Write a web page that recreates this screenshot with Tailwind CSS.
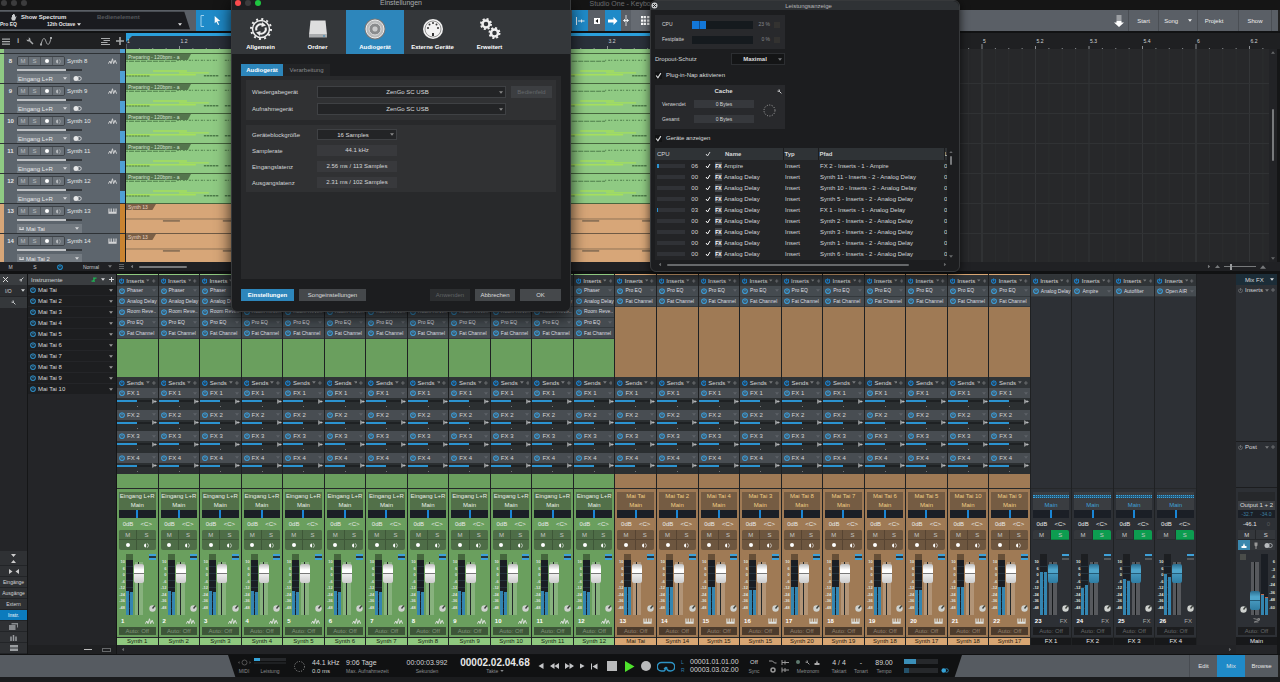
<!DOCTYPE html>
<html lang="de">
<head>
    <meta charset="UTF-8">
    <title>Studio One</title>
    <script src="https://cdn.jsdelivr.net/npm/@tailwindcss/browser@4"></script>
</head>
<body class="relative flex min-h-screen flex-col overflow-hidden bg-[#111213] font-['Liberation_Sans',Arial,sans-serif] text-[6px] leading-[8px] text-[#d4d6d8] select-none">

    <!-- icon set -->
    <svg class="hidden">
        <symbol id="power" viewBox="0 0 12 12"><path d="M3 2.600a4.700 4.700 0 1 0 6 0M6 1v5" fill="none" stroke="currentColor" stroke-width="2.400" stroke-linecap="round"/></symbol>
        <symbol id="caret" viewBox="0 0 10 6"><path d="M0 0h10L5 6z" fill="currentColor"/></symbol>
        <symbol id="plus" viewBox="0 0 10 10"><path d="M5 0v10M0 5h10" stroke="currentColor" stroke-width="2"/></symbol>
        <symbol id="wrench" viewBox="0 0 16 16"><path d="M7 7l7 7" stroke="currentColor" stroke-width="3"/><path d="M5 1a4 4 0 1 1-4 4l3 1 2-2z" fill="currentColor"/></symbol>
        <symbol id="wave" viewBox="0 0 24 16"><path d="M1 15l4-7 3 7 4-13 3 13 4-9 4 9" fill="none" stroke="currentColor" stroke-width="2.600"/></symbol>
        <symbol id="keys" viewBox="0 0 24 14"><path d="M1 0h3v9h3V0h3v9h4V0h3v9h3V0h3v14H1z" fill="currentColor"/></symbol>
        <symbol id="half" viewBox="0 0 12 12"><path d="M5 1a5 5 0 0 0 0 10z" fill="currentColor"/><path d="M7 1.200a5 5 0 0 1 0 9.600" fill="none" stroke="currentColor" stroke-width="1.400"/></symbol>
        <symbol id="stereo" viewBox="0 0 18 10"><circle cx="6" cy="5" r="5" fill="currentColor"/><circle cx="12.500" cy="5" r="4" fill="none" stroke="currentColor" stroke-width="1.600"/></symbol>
        <symbol id="knob" viewBox="0 0 12 12"><circle cx="6" cy="6" r="5.500" fill="currentColor"/><path d="M6 6L10 1" stroke="#3c403c" stroke-width="2.400"/></symbol>
        <symbol id="check" viewBox="0 0 12 12"><path d="M2 6l3 4 5-8" fill="none" stroke="currentColor" stroke-width="2"/></symbol>
        <symbol id="sendpan" viewBox="0 0 14 12"><path d="M2 0v12M5 2v8M5 6h8M9 3v6" fill="none" stroke="currentColor" stroke-width="2"/></symbol>
    </svg>

    <!-- title bar -->
    <header class="flex h-[10px] items-start bg-[#151515] text-[7px] leading-[7px] text-[#6d6f71]">
        <div class="flex gap-[4px] pl-[1px]">
            <span class="size-[6px] rounded-full bg-[#3c3c3d]"></span>
            <span class="size-[6px] rounded-full bg-[#3c3c3d]"></span>
            <span class="size-[6px] rounded-full bg-[#3c3c3d]"></span>
        </div>
        <h1 class="flex-1 pr-[36px] text-center">Studio One - Keyboard Demo</h1>
    </header>

    <!-- toolbar -->
    <div class="flex h-[21px] bg-[#5a5f66]">
        <div class="flex w-[190px] flex-col justify-center bg-[#1a1b1f] font-bold leading-[7px] text-[#e4e5e6] [clip-path:polygon(0_8%,97%_8%,100%_92%,0_92%)]">
            <div class="flex items-center">
                <svg class="ml-[10px] h-[7px] w-[7px] text-[#c9cbcd]" viewBox="0 0 14 14"><path d="M2 7l2 0V2h2v4-6h2v6-5h2v6l2-3 1 1-3 8H4z" fill="currentColor"/></svg>
                <span class="ml-[4px] w-[76px]">Show Spectrum</span>
                <span class="text-[#55585c]">Bedienelement</span>
            </div>
            <div class="flex items-center">
                <span class="w-[47px] text-[5px]">Pro EQ</span>
                <span class="text-[5px]">12th Octave</span>
                <svg class="ml-[2px] h-[3px] w-[4px]"><use href="#caret"/></svg>
                <svg class="mr-[8px] ml-auto h-[3px] w-[4px]"><use href="#caret"/></svg>
            </div>
        </div>
        <div class="ml-[6px] flex w-[60px] items-center gap-[10px] bg-[#1f8ac8] pl-[4px] text-white">
            <svg class="h-[12px] w-[4px]" viewBox="0 0 4 12"><path d="M4 .5H1v11h3" fill="none" stroke="#9dd0ee"/></svg>
            <button aria-label="Pfeil"><svg class="h-[9px] w-[7px]" viewBox="0 0 12 16"><path d="M1 0l10 9-5 .5L9 15l-2 1-3-6-3 3z" fill="#fff"/></svg></button>
            <button aria-label="Bereich"><svg class="size-[8px]" viewBox="0 0 12 12"><path d="M1 1h8v8H1z" fill="none" stroke="#cde6f5" stroke-dasharray="2"/></svg></button>
        </div>
        <div class="flex flex-1">
            <div class="flex w-[403px] justify-end">
                <button aria-label="Raster" class="flex w-[16px] items-center justify-center bg-[#1f8ac8]"><svg class="h-[8px] w-[9px]" viewBox="0 0 18 16"><path d="M1 0v16M4 8h13M11 5v6" stroke="#eaf4fa" stroke-width="2"/></svg></button>
                <button aria-label="Cursor folgt" class="flex w-[17px] items-center justify-center"><svg class="h-[6px] w-[6px]" viewBox="0 0 12 12"><path d="M0 0h12v12H0z" fill="#fff"/><path d="M8 2L3 6l5 4z" fill="#111"/></svg></button>
                <button aria-label="Autoscroll" class="flex w-[16px] items-center justify-center bg-[#1f8ac8]"><svg class="h-[8px] w-[10px]" viewBox="0 0 20 16"><path d="M0 5h11V0l8 8-8 8v-5H0z" fill="#fff"/></svg></button>
                <button aria-label="Cursor" class="flex w-[10px] items-center justify-center"><svg class="h-[11px] w-[6px]" viewBox="0 0 12 22"><path d="M6 0v22M0 11h12M3 8v6M9 8v6" stroke="#fff" stroke-width="1.500"/></svg></button>
                <button aria-label="Quantisierung" class="flex w-[28px] items-center justify-center bg-[#666b72]"><svg class="size-[9px]" viewBox="0 0 16 16"><path d="M2 0v16M7 0v16M13 0v16" stroke="#fff" stroke-width="4" stroke-dasharray="4 2"/></svg></button>
            </div>
        </div>
        <nav class="flex items-stretch text-[#eceded]">
            <span class="flex w-[22px] items-center pl-[8px]"><svg class="h-[12px] w-[10px]" viewBox="0 0 20 24"><path d="M5 0h10v15h5L10 24 0 15h5z" fill="#fff"/><path d="M4 0h12v12H4z" fill="#5a5f66" fill-opacity=".6"/></svg></span>
            <button class="w-[30px] border-l border-[#4a4e54]">Start</button>
            <button class="w-[39px] border-l border-[#4a4e54]">Song <svg class="ml-[8px] inline h-[3px] w-[4px]"><use href="#caret"/></svg></button>
            <button class="w-[41px] border-l border-[#4a4e54] pr-[8px]">Projekt</button>
            <button class="w-[33px] border-l border-[#4a4e54]">Show</button>
            <span class="w-[9px] border-r-2 border-l border-r-[#222] border-l-[#4a4e54]"></span>
        </nav>
    </div>

    <!-- arrangement -->
    <div class="mt-[2px] flex h-[16px] bg-[#1f2022]">
        <div class="flex w-[126px] items-center gap-[6px] pl-[2px] text-[#a8aaac]">
            <svg class="h-[7px] w-[8px]" viewBox="0 0 16 14"><path d="M0 2h16M0 7h16M0 12h16" stroke="currentColor" stroke-width="2.500"/></svg>
            <span class="w-[4px] text-center text-[8px] font-bold">i</span>
            <svg class="size-[8px]"><use href="#wrench"/></svg>
            <svg class="h-[9px] w-[12px]" viewBox="0 0 24 18"><path d="M2 15C6 0 9 0 12 9s7 8 10-7" fill="none" stroke="currentColor" stroke-width="2"/><path d="M0 13h4v4H0zM20 0h4v4h-4z" fill="currentColor"/></svg>
            <svg class="ml-auto h-[7px] w-[9px]" viewBox="0 0 18 14"><path d="M0 1h18M5 5h13M0 9h13M0 13h18" stroke="currentColor" stroke-width="2"/></svg>
            <svg class="mr-[2px] size-[8px]"><use href="#plus"/></svg>
        </div>
        <div class="relative flex-1 overflow-hidden">
            <div class="h-[3px] w-[60%] bg-[#2b9fdc]"></div>
            <div class="h-[13px] w-[60%] bg-[#2a303a]"></div>
            <div id="ruler" class="absolute inset-0 text-[5px]"></div>
        </div>
        <div class="w-[11px]"></div>
    </div>

    <div class="flex h-[213px]">
        <div id="tracks" class="flex w-[126px] flex-col justify-start overflow-hidden border-r border-[#1a1b1d] bg-[#5d656d]"></div>
        <div class="relative flex-1 overflow-hidden bg-[#27282a]">
            <svg id="grid" class="absolute inset-0 size-full" viewBox="0 0 1143 213" preserveAspectRatio="none"></svg>
            <div id="clips" class="relative w-[60%] border-r border-[#222]"></div>
        </div>
        <div class="flex w-[8px] flex-col items-center justify-between bg-[#222326] py-[2px] text-[#66686a]">
            <svg class="h-[3px] w-[4px] rotate-180"><use href="#caret"/></svg>
            <div class="mb-[42px] h-[52px] w-[2px] rounded bg-[#77797b]"></div>
            <svg class="h-[3px] w-[4px]"><use href="#caret"/></svg>
        </div>
        <div class="w-[3px] bg-[#151617]"></div>
    </div>

    <div class="flex h-[9px] items-center bg-[#202124] text-[5px] text-[#c9cbcd]">
        <button class="w-[21px]">M</button>
        <button class="w-[28px]">S</button>
        <button aria-label="Aktiv" class="w-[21px] text-[#1f8ac8]"><svg class="mx-auto size-[6px]"><use href="#power"/></svg></button>
        <button class="ml-[6px] w-[30px]">Normal</button>
        <svg class="ml-[2px] h-[3px] w-[4px] text-[#77797b]"><use href="#caret"/></svg>
        <svg class="ml-[7px] size-[5px] text-[#77797b]" viewBox="0 0 10 10"><path d="M0 1h10M0 5h10M0 9h10" stroke="currentColor" stroke-width="1.500"/></svg>
        <svg class="ml-[6px] h-[3px] w-[4px] rotate-90 text-[#77797b]"><use href="#caret"/></svg>
        <div class="ml-[5px] h-[2px] w-[48px] rounded bg-[#77797b]"></div>
        <div class="ml-auto mr-[14px] flex items-center gap-[4px] text-[#77797b]">
            <svg class="h-[3px] w-[4px] -rotate-90"><use href="#caret"/></svg>
            <svg class="h-[3px] w-[5px] rotate-180"><use href="#caret"/></svg>
            <input type="range" aria-label="Zoom" value="20" class="h-px w-[32px] appearance-none bg-[#77797b] [&::-webkit-slider-thumb]:h-[6px] [&::-webkit-slider-thumb]:w-[2px] [&::-webkit-slider-thumb]:appearance-none [&::-webkit-slider-thumb]:bg-[#9a9c9e]">
            <svg class="h-[4px] w-[6px] rotate-180"><use href="#caret"/></svg>
        </div>
    </div>

    <!-- mixer -->
    <main class="mt-[3px] flex flex-1 bg-[#242528]">
        <aside class="flex w-[27px] flex-col text-[5px] leading-[6px]">
            <div class="flex h-[11px] items-center justify-between bg-[#3a3d40] px-[3px]">
                <button aria-label="Schließen"><svg class="size-[5px]" viewBox="0 0 10 10"><path d="M0 0l10 10M10 0L0 10" stroke="#ddd" stroke-width="2"/></svg></button>
                <svg class="size-[5px] -rotate-90"><use href="#wrench"/></svg>
            </div>
            <div class="flex h-[11px] items-center justify-between bg-[#2c2e31] pr-[2px] pl-[5px]">I/O <svg class="h-[3px] w-[4px]"><use href="#caret"/></svg></div>
            <div class="mt-px flex h-[11px] items-center justify-center bg-[#35383b]"><svg class="size-[5px]"><use href="#wrench"/></svg></div>
            <div class="mt-auto grid auto-rows-[11px] grid-rows-[15px] *:border-b *:border-[#222427]">
                <button aria-label="Höhe" class="bg-[#2f3134]"><svg class="mx-auto h-[9px] w-[5px]" viewBox="0 0 10 18"><path d="M0 0h10L5 6zM0 18h10l-5-6z" fill="#ccc"/></svg></button>
                <button aria-label="Breite" class="bg-[#2f3134]"><svg class="mx-auto h-[5px] w-[10px]" viewBox="0 0 20 10"><path d="M0 0v10l7-5zM20 0v10l-7-5z" fill="#ccc"/></svg></button>
                <button class="bg-[#2f3134]">Eingänge</button>
                <button class="bg-[#2f3134]">Ausgänge</button>
                <button class="bg-[#2f3134]">Extern</button>
                <button class="bg-[#0c7bbd] text-white">Instr.</button>
                <button aria-label="Gruppen" class="bg-[#2f3134]"><svg class="mx-auto h-[7px] w-[9px]" viewBox="0 0 18 14"><path d="M5 0h13v9h-2V3H5zM0 4h13v10H0z" fill="#888b8e"/></svg></button>
                <button aria-label="Fader" class="bg-[#2f3134]"><svg class="mx-auto size-[7px]" viewBox="0 0 14 14"><path d="M2 5v9M7 2v12M12 5v9" stroke="#9a9da0" stroke-width="3"/></svg></button>
                <button aria-label="Liste" class="bg-[#2f3134]"><svg class="mx-auto h-[6px] w-[8px]" viewBox="0 0 16 12"><path d="M0 0h16v5H0zM0 7h16v5H0z" fill="#9a9da0"/></svg></button>
            </div>
        </aside>
        <section class="flex w-[90px] flex-col border-x border-[#151617]">
            <h2 class="flex h-[11px] items-center gap-[4px] bg-[#3a3d40] pr-[2px] pl-[3px]">
                <span class="flex-1">Instrumente</span>
                <svg class="h-[5px] w-[6px]" viewBox="0 0 12 10"><path d="M4 2h7M1 8h7M8 2L4 8" stroke="#1fb254" stroke-width="2.500"/></svg>
                <svg class="h-[3px] w-[4px]"><use href="#caret"/></svg>
                <svg class="size-[5px]"><use href="#plus"/></svg>
            </h2>
            <ul id="instruments"></ul>
            <div class="mt-auto flex h-[9px] items-center justify-end gap-[10px] bg-[#1f2022] pr-[5px]">
                <span class="h-px w-[8px] bg-[#bbb]"></span>
                <span class="h-[4px] w-[9px] border border-[#66686a]"></span>
            </div>
        </section>
        <div class="flex flex-1 flex-col">
            <div class="flex">
                <div id="channels" class="grid flex-1 grid-cols-[repeat(26,minmax(0,1fr))]"></div>
                <div class="w-[39px]"></div>
            </div>
            <div class="flex h-[9px] items-center justify-between bg-[#222326] px-[4px] text-[#66686a]">
                <svg class="h-[3px] w-[4px] rotate-90"><use href="#caret"/></svg>
                <svg class="h-[3px] w-[4px] -rotate-90"><use href="#caret"/></svg>
            </div>
        </div>
        <div id="mainout" class="w-[41px]"></div>
        <div class="w-[3px] bg-[#151617]"></div>
    </main>

    <!-- transport -->
    <footer class="mt-px flex h-[27px] border-b-[5px] border-[#1b1c1e] bg-[#565b61] text-[5px] leading-[6px] text-[#8a8c8f]">
        <div class="ml-[228px] flex w-[734px] items-center bg-[#101112] pl-[8px] [clip-path:polygon(0_0,100%_0,99%_100%,1%_100%)]">
            <div class="flex w-[16px] flex-col items-center gap-[2px]"><svg class="h-[7px] w-[13px]" viewBox="0 0 26 14"><circle cx="13" cy="7" r="5" fill="none" stroke="#555" stroke-width="2"/><path d="M3 4v6l-3-3zM23 4v6l3-3z" fill="#555"/></svg>MIDI</div>
            <div class="flex w-[36px] flex-col items-center gap-[4px]">
                <div class="flex w-[32px] flex-col gap-px"><div class="h-[3px] bg-[#26282b]"><div class="h-full w-[20%] bg-[#35a3d8]"></div></div><div class="h-[2px] bg-[#1e2022]"></div></div>
                Leistung
            </div>
            <svg class="ml-[5px] size-[13px]" viewBox="0 0 26 26"><circle cx="13" cy="13" r="10" fill="none" stroke="#999" stroke-width="2" stroke-dasharray="2 3"/></svg>
            <div class="ml-[6px] w-[34px]"><div class="text-[7px] leading-[9px] text-[#d4d5d6]">44.1 kHz</div><div class="text-[6px] leading-[8px] text-[#d4d5d6]">0.0 ms</div></div>
            <div class="w-[50px]"><div class="text-[7px] leading-[9px] text-[#d4d5d6]">9:06 Tage</div><div class="leading-[8px]">Max. Aufnahmezeit</div></div>
            <div class="ml-[5px] w-[52px] text-center"><div class="text-[7px] leading-[9px] text-[#d4d5d6]">00:00:03.992</div><div class="leading-[8px]">Sekunden</div></div>
            <div class="ml-[3px] w-[78px] text-center"><div class="text-[10px] leading-[10px] font-bold text-[#e6e7e8]">00002.02.04.68</div><div class="leading-[7px]">Takte <svg class="inline h-[2px] w-[4px]"><use href="#caret"/></svg></div></div>
            <div class="ml-[4px] flex items-center gap-[6px] text-[#c4c5c7]">
                <button aria-label="Zurück"><svg class="h-[6px] w-[6px]" viewBox="0 0 12 12"><path d="M11 0v12L1 6z" fill="currentColor"/></svg></button>
                <button aria-label="Rückspulen"><svg class="h-[6px] w-[9px]" viewBox="0 0 18 12"><path d="M9 0v12L0 6zM18 0v12L9 6z" fill="currentColor"/></svg></button>
                <button aria-label="Vorspulen"><svg class="h-[6px] w-[9px]" viewBox="0 0 18 12"><path d="M0 0v12l9-6zM9 0v12l9-6z" fill="currentColor"/></svg></button>
                <button aria-label="Weiter"><svg class="h-[6px] w-[5px]" viewBox="0 0 12 12"><path d="M0 0v12l11-6z" fill="currentColor"/></svg></button>
                <button aria-label="Anfang"><svg class="h-[7px] w-[7px]" viewBox="0 0 14 14"><path d="M0 1h2v12H0zM13 1v12L3 7z" fill="currentColor"/></svg></button>
                <button aria-label="Stopp" class="ml-[3px] size-[10px] bg-[#b9babb]"></button>
                <button aria-label="Wiedergabe" class="ml-[2px]"><svg class="h-[11px] w-[10px]" viewBox="0 0 20 22"><path d="M0 0v22l19-11z" fill="#4ee22c"/></svg></button>
                <button aria-label="Aufnahme" class="size-[10px] rounded-full bg-[#b9babb]"></button>
                <button aria-label="Loop"><svg class="h-[11px] w-[18px]" viewBox="0 0 36 22"><path d="M13 20H9a8 8 0 0 1 0-17h18a8 8 0 0 1 0 17c-5 0-8-3-8-8M19 12l-5 4M13 20c4 0 4-4 4-8" fill="none" stroke="#2d93c4" stroke-width="3"/></svg></button>
            </div>
            <div class="ml-[6px] grid grid-cols-[9px_50px] text-[7px] leading-[8px] text-[#d4d5d6]">
                <span class="text-[5px] text-[#2d7cab]">L</span><span>00001.01.01.00</span>
                <span class="text-[5px] text-[#2d7cab]">R</span><span>00003.03.02.00</span>
            </div>
            <div class="ml-[4px] w-[20px] text-center"><div class="text-[6px] leading-[9px] text-[#d4d5d6]">Off</div><div class="leading-[8px]">Sync</div></div>
            <svg class="ml-[5px] h-[14px] w-[20px]" viewBox="0 0 40 28"><path d="M0 4h7l4 4h4M26 2v10M26 7h14M32 3v8M26 17v10M26 22h14M32 18v8" fill="none" stroke="#999" stroke-width="2"/><circle cx="8" cy="22" r="4" fill="none" stroke="#999" stroke-width="3"/></svg>
            <div class="ml-[4px] w-[30px] text-center">
                <div class="flex h-[9px] items-center justify-between px-[3px] text-[#aaa]"><span class="size-[4px] rounded-full bg-[#5f7a70]"></span><svg class="size-[5px]"><use href="#wrench"/></svg><svg class="h-[5px] w-[6px]" viewBox="0 0 12 10"><path d="M6 0l2 6h3v4H1V6h3z" fill="#aaa"/></svg></div>
                <div class="leading-[8px]">Metronom</div>
            </div>
            <div class="ml-[4px] w-[24px] text-center"><div class="text-[7px] leading-[9px] text-[#d4d5d6]">4 / 4</div><div class="leading-[8px]">Taktart</div></div>
            <div class="w-[20px] text-center"><div class="text-[7px] leading-[9px] text-[#d4d5d6]">-</div><div class="leading-[8px]">Tonart</div></div>
            <div class="w-[26px] text-center"><div class="text-[7px] leading-[9px] text-[#d4d5d6]">89.00</div><div class="leading-[8px]">Tempo</div></div>
            <div class="ml-[7px] flex flex-col gap-[4px]">
                <div class="h-[5px] w-[34px] bg-[#26282b]"><div class="h-full w-[34%] bg-[#3b8fb8]"></div></div>
                <div class="h-[5px] w-[34px] bg-[#26282b]"><div class="h-full w-[14%] bg-[#24516a]"></div></div>
            </div>
            <svg class="mt-[9px] ml-[3px] h-[5px] w-[8px] shrink-0 text-[#35a3d8]"><use href="#stereo"/></svg>
        </div>
        <div class="ml-auto flex text-[6px] text-[#e4e5e6]">
            <button class="w-[28px] border-l border-[#484c52]">Edit</button>
            <button class="w-[28px] bg-[#1f8ac8]">Mix</button>
            <button class="w-[33px]">Browse</button>
            <span class="w-[2px] bg-[#222]"></span>
        </div>
    </footer>

    <!-- settings window -->
    <div role="dialog" aria-label="Einstellungen" class="absolute top-0 left-[231px] flex h-[312px] w-[340px] flex-col rounded-b-md border border-t-0 border-[#37393b] bg-[#1c1d1f] shadow-[0_4px_16px_rgba(0,0,0,0.8)]">
        <div class="flex h-[10px] items-start bg-[#1e1f21]">
            <div class="flex w-[60px] gap-[4px] pl-[3px]">
                <span class="size-[6px] rounded-full bg-[#fb4b4d]"></span>
                <span class="size-[6px] rounded-full bg-[#3c3c3d]"></span>
                <span class="size-[6px] rounded-full bg-[#1fc540]"></span>
            </div>
            <h2 class="flex-1 pr-[60px] text-center text-[7px] leading-[6px] text-[#a9abad]">Einstellungen</h2>
        </div>
        <div class="flex h-[44px] bg-[#34373a] font-bold text-white">
            <button class="flex w-[57px] flex-col items-center justify-end gap-[2px] pb-[3px]">
                <svg class="size-[24px]" viewBox="0 0 48 48" fill="none" stroke="#eee"><circle cx="24" cy="24" r="17" stroke-width="3"/><circle cx="24" cy="24" r="20" stroke-width="4" stroke-dasharray="4 6.470"/><path d="M15 27a9 9 0 0 1 13-11M33 21a9 9 0 0 1-13 11" stroke-width="4"/><path d="M26 10l8 7-9 3zM22 38l-8-7 9-3z" fill="#eee" stroke="none"/></svg>
                Allgemein
            </button>
            <button class="flex w-[57px] flex-col items-center justify-end gap-[2px] pb-[3px]">
                <svg class="size-[24px]" viewBox="0 0 48 48"><path d="M9 7h30l3 29H6z" fill="#dedede"/><path d="M6 34h36v7H6z" fill="#a9abad"/><path d="M34 37h4v2h-4z" fill="#2d86bb"/></svg>
                Ordner
            </button>
            <button class="flex w-[58px] flex-col items-center justify-end gap-[2px] bg-[#2d86bb] pb-[3px]">
                <svg class="size-[24px]" viewBox="0 0 48 48"><circle cx="24" cy="24" r="21" fill="#77797b"/><circle cx="24" cy="24" r="18" fill="#b9babb" stroke="#eee" stroke-width="2"/><circle cx="24" cy="24" r="12" fill="#8a8c8e" stroke="#ddd" stroke-width="2"/><circle cx="24" cy="24" r="6" fill="#c9cacb" stroke="#777"/></svg>
                Audiogerät
            </button>
            <button class="flex w-[57px] flex-col items-center justify-end gap-[2px] pb-[3px]">
                <svg class="size-[24px]" viewBox="0 0 48 48"><circle cx="24" cy="24" r="20" fill="#f2f2f2"/><circle cx="24" cy="24" r="16" fill="none" stroke="#777" stroke-width="1.500"/><g fill="#333"><circle cx="14" cy="22" r="2"/><circle cx="17" cy="15" r="2"/><circle cx="24" cy="12" r="2"/><circle cx="31" cy="15" r="2"/><circle cx="34" cy="22" r="2"/><path d="M22 32h4v6h-4z"/></g></svg>
                <span class="whitespace-nowrap">Externe Geräte</span>
            </button>
            <button class="flex w-[57px] flex-col items-center justify-end gap-[2px] pb-[3px]">
                <svg class="size-[24px]" viewBox="0 0 48 48" fill="none" stroke="#eee"><circle cx="16" cy="14" r="7" stroke-width="5"/><circle cx="16" cy="14" r="10" stroke-width="4" stroke-dasharray="4 3.850"/><circle cx="33" cy="32" r="7" stroke-width="5"/><circle cx="33" cy="32" r="10" stroke-width="4" stroke-dasharray="4 3.850"/></svg>
                Erweitert
            </button>
        </div>
        <div class="mx-[9px] mt-[10px] flex h-[12px]">
            <button class="w-[42px] bg-[#2d86bb] font-bold text-white">Audiogerät</button>
            <button class="w-[47px] bg-[#222325] text-[#888a8d]">Verarbeitung</button>
        </div>
        <div class="mx-[9px] flex h-[203px] flex-col gap-[5px] bg-[#28292b] px-[5px] pt-[4px]">
            <div class="grid h-[40px] grid-cols-[60px_189px_41px] content-center gap-x-[5px] gap-y-[5px] bg-[#303133] pl-[6px]">
                <label for="playback" class="self-center">Wiedergabegerät</label>
                <span class="relative"><select id="playback" class="h-[12px] w-full appearance-none border border-[#3f4144] bg-[#232426] pr-[8px] text-[#dcddde] [text-align-last:center]"><option>ZenGo SC USB</option></select><svg class="absolute top-[5px] right-[3px] h-[3px] w-[4px] text-[#888]"><use href="#caret"/></svg></span>
                <button class="h-[12px] bg-[#3c3e41] text-[#65686b]" disabled>Bedienfeld</button>
                <label for="record" class="self-center">Aufnahmegerät</label>
                <span class="relative"><select id="record" class="h-[12px] w-full appearance-none border border-[#3f4144] bg-[#232426] pr-[8px] text-[#dcddde] [text-align-last:center]"><option>ZenGo SC USB</option></select><svg class="absolute top-[5px] right-[3px] h-[3px] w-[4px] text-[#888]"><use href="#caret"/></svg></span>
            </div>
            <div class="grid h-[67px] grid-cols-[60px_80px] content-center items-center gap-x-[5px] gap-y-[5px] bg-[#303133] pl-[6px]">
                <label for="block">Geräteblockgröße</label>
                <span class="relative"><select id="block" class="h-[11px] w-full appearance-none border border-[#3f4144] bg-[#232426] pr-[8px] text-[#dcddde] [text-align-last:center]"><option>16 Samples</option></select><svg class="absolute top-[4px] right-[3px] h-[3px] w-[4px] text-[#888]"><use href="#caret"/></svg></span>
                <span>Samplerate</span><output class="h-[11px] bg-[#38393c] text-center leading-[11px]">44.1 kHz</output>
                <span>Eingangslatenz</span><output class="h-[11px] bg-[#38393c] text-center leading-[11px]">2.56 ms / 113 Samples</output>
                <span>Ausgangslatenz</span><output class="h-[11px] bg-[#38393c] text-center leading-[11px]">2.31 ms / 102 Samples</output>
            </div>
        </div>
        <div class="mx-[9px] mt-[10px] flex h-[12px] gap-[5px] text-[#dcddde]">
            <button class="w-[53px] bg-[#2d86bb] font-bold text-white">Einstellungen</button>
            <button class="w-[67px] bg-[#45484b]">Songeinstellungen</button>
            <button class="ml-auto w-[40px] bg-[#2c2e30] text-[#606366]" disabled>Anwenden</button>
            <button class="w-[40px] bg-[#45484b]">Abbrechen</button>
            <button class="w-[41px] bg-[#45484b]">OK</button>
        </div>
    </div>

    <!-- performance window -->
    <div role="dialog" aria-label="Leistungsanzeige" class="absolute top-0 left-[650px] flex h-[272px] w-[310px] flex-col rounded-md border border-[#37393b] bg-[#1c1d1f] shadow-[0_2px_10px_rgba(0,0,0,0.7)]">
        <div class="flex h-[9px] items-center rounded-t-md bg-[#2f3235] text-[#b5b7b9]">
            <button aria-label="Schließen"><svg class="size-[7px]" viewBox="0 0 14 14"><circle cx="7" cy="7" r="6" fill="#c9cbcd"/><path d="M4 4l6 6M10 4l-6 6" stroke="#222" stroke-width="2"/></svg></button>
            <h2 class="flex-1 text-center">Leistungsanzeige</h2>
        </div>
        <div class="px-[4px]">
            <div class="mt-[5px] grid h-[34px] w-[130px] grid-cols-[29px_61px_16px_7px] content-center items-center gap-x-[1px] gap-y-[7px] bg-[#28292c] pl-[7px] text-[5px] leading-[7px]">
                <span>CPU</span><div class="h-[8px] bg-[#151a1e]"><div class="flex h-full w-[23%] justify-center bg-[#1377d8]"><span class="w-px bg-[#0d4f94]"></span></div></div><span class="text-right text-[#888a8d]">23 %</span><span class="ml-[3px] size-[6px] bg-[#333230]"></span>
                <span>Festplatte</span><div class="h-[8px] bg-[#151a1e]"></div><span class="text-right text-[#888a8d]">0 %</span><span class="ml-[3px] size-[6px] bg-[#333230]"></span>
            </div>
            <div class="mt-[4px] flex w-[130px] items-center justify-between">
                <label for="dropout">Dropout-Schutz</label>
                <span class="relative"><select id="dropout" class="h-[12px] w-[54px] appearance-none border border-[#2c2e31] bg-[#141516] pr-[6px] font-bold text-[#dcddde] [text-align-last:center]"><option>Maximal</option></select><svg class="absolute top-[5px] right-[3px] h-[3px] w-[4px] text-[#77797c]"><use href="#caret"/></svg></span>
            </div>
            <label class="mt-[5px] flex h-[10px] items-center gap-[4px] text-[#dcddde]">
                <span class="grid"><input type="checkbox" checked class="col-start-1 row-start-1 size-[7px] appearance-none bg-[#121314]"><svg class="col-start-1 row-start-1 size-[7px]"><use href="#check"/></svg></span>Plug-in-Nap aktivieren
            </label>
            <div class="mt-[5px] h-[44px] w-[130px] bg-[#28292c] px-[7px] text-[5px] leading-[7px]">
                <div class="flex h-[12px] items-center text-[6px] text-[#dcddde]"><h3 class="flex-1 pl-[8px] text-center font-bold">Cache</h3><svg class="-mr-[4px] size-[5px]"><use href="#wrench"/></svg></div>
                <div class="flex items-center justify-between">
                    <div class="grid grid-cols-[32px_60px] items-center gap-y-[7px] pt-[3px]">
                        <span>Verwendet</span><span class="h-[8px] bg-[#36383c] text-center leading-[8px]">0 Bytes</span>
                        <span>Gesamt</span><span class="h-[8px] bg-[#36383c] text-center leading-[8px]">0 Bytes</span>
                    </div>
                    <svg class="mr-[2px] size-[13px]" viewBox="0 0 26 26"><circle cx="13" cy="13" r="11" fill="none" stroke="#aaa" stroke-width="2" stroke-dasharray="2 3"/></svg>
                </div>
            </div>
            <label class="mt-[4px] flex h-[10px] items-center gap-[4px] text-[#dcddde]">
                <span class="grid"><input type="checkbox" checked class="col-start-1 row-start-1 size-[7px] appearance-none bg-[#121314]"><svg class="col-start-1 row-start-1 size-[7px]"><use href="#check"/></svg></span>Geräte anzeigen
            </label>
            <div class="mt-[5px] flex h-[112px] overflow-hidden">
                <table class="w-[292px] table-fixed bg-[#232426]">
                    <colgroup><col class="w-[46px]"><col class="w-[14px]"><col class="w-[68px]"><col class="w-[35px]"><col class="w-[126px]"><col class="w-[3px]"></colgroup>
                    <thead class="bg-[#2f3336] text-left">
                        <tr class="h-[12px]"><th class="pl-[2px] font-normal">CPU</th><th><svg class="mx-auto size-[6px]"><use href="#check"/></svg></th><th class="pl-[10px] font-bold">Name</th><th class="border-l border-[#1c1d1f] pl-[1px] font-bold">Typ</th><th class="border-l border-[#1c1d1f] pl-[1px] font-bold">Pfad</th><th class="overflow-hidden border-l border-[#1c1d1f] font-normal">L</th></tr>
                    </thead>
                    <tbody id="devices"></tbody>
                </table>
                <div class="flex w-[8px] flex-col items-center gap-[3px] pt-[3px] text-[#66686a]">
                    <svg class="h-[2px] w-[4px] rotate-180"><use href="#caret"/></svg>
                    <div class="h-[9px] w-[2px] rounded bg-[#77797b]"></div>
                    <svg class="mt-auto mb-[2px] h-[3px] w-[4px]"><use href="#caret"/></svg>
                </div>
            </div>
            <div class="flex h-[9px] w-[292px] items-center gap-[5px] pl-[3px] text-[#66686a]">
                <svg class="h-[3px] w-[4px] rotate-90"><use href="#caret"/></svg>
                <div class="h-[2px] w-[242px] rounded bg-[#66686a]"></div>
                <svg class="ml-auto h-[3px] w-[4px] -rotate-90"><use href="#caret"/></svg>
            </div>
        </div>
    </div>

    <script>
    const BAR = 214;
    const WIDTH = 1143;
    const icon = (name, cls) => `<svg class="${cls}"><use href="#${name}"/></svg>`;
    const fill = (id, html) => { document.getElementById(id).innerHTML = html; };

    // ruler and grid
    let ticks = '', labels = '', lines = '';
    for (let i = 0; i * BAR / 16 < WIDTH; i++) {
        const x = i * BAR / 16;
        const top = i % 16 === 0 ? 11 : i % 4 === 0 ? 13 : 15;
        ticks += `<path d="M${x} ${top}V16" stroke="#8b8e92"/>`;
        const color = i % 16 === 0 ? '#3b3d3f' : i % 4 === 0 ? '#333537' : '#2c2d2f';
        lines += `<path d="M${x} 0V213" stroke="${color}"/>`;
        if (i % 4 === 0) {
            const beat = i / 4 % 4;
            const name = Math.floor(i / 16) + 1 + (beat ? '.' + (beat + 1) : '');
            labels += `<span class="absolute top-[4px] pl-[1px]" style="left:${x / WIDTH * 100}%">${name}</span>`;
        }
    }
    for (let y = 34; y < 213; y += 30) lines += `<path d="M0 ${y + .5}H${WIDTH}" stroke="#303234"/>`;
    fill('ruler', `<svg class="absolute inset-0 size-full" viewBox="0 0 1143 16" preserveAspectRatio="none">${ticks}<path d="M0 3h6l-6 6z" fill="#2b9fdc"/></svg>${labels}`);
    fill('grid', lines);

    // track list
    const tracks = [8, 9, 10, 11, 12, 13, 14].map(n => ({ n, midi: n > 12, input: n === 13 ? 'Mai Tai' : n === 14 ? 'Mai Tai 2' : 'Eingang L+R' }));
    const trackRow = t => `
        <div class="flex h-[30px] shrink-0 border-b border-[#2e3236]">
            <div class="${t.midi ? 'w-[4px] bg-[#d7a678]' : 'w-[4px] bg-[#8fca83]'}"></div>
            <div class="w-[13px] pt-[3px] text-center font-bold text-[#e6e7e8]">${t.n}</div>
            <div class="flex flex-1 flex-col pt-[2px]">
                <div class="flex h-[10px] items-center">
                    <div class="flex h-[10px] overflow-hidden rounded-xs border border-[#3e4348] text-[6px] text-[#b9bcbf]">
                        <button class="w-[11px] border-r border-[#50565c] bg-[#6b7279]">M</button>
                        <button class="w-[12px] border-r border-[#50565c] bg-[#6b7279]">S</button>
                        <button aria-label="Aufnahme" class="flex w-[12px] items-center justify-center border-r border-[#50565c] bg-[#6b7279]"><span class="size-[4px] rounded-full bg-white"></span></button>
                        <button aria-label="Monitor" class="flex w-[11px] items-center justify-center bg-[#6b7279]">${icon('half', 'size-[5px]')}</button>
                    </div>
                    <span class="ml-[2px] flex-1 whitespace-nowrap text-[#e6e7e8]">Synth ${t.n}</span>
                    ${icon(t.midi ? 'keys' : 'wave', 'mr-[3px] h-[6px] w-[9px] text-[#d4d5d6]')}
                </div>
                <input type="range" aria-label="Lautstärke" class="mt-[3px] block h-[2px] w-[65px] appearance-none bg-linear-to-r from-[#bfc2c5] from-75% to-[#33373b] to-75% [&::-webkit-slider-thumb]:w-0 [&::-webkit-slider-thumb]:appearance-none">
                <div class="mt-[3px] flex items-center gap-[3px]">
                    <span class="relative"><select aria-label="Eingang" class="${t.midi ? 'block h-[9px] w-[65px] appearance-none bg-[#737a81] pl-[9px] leading-[8px] text-[#e6e7e8]' : 'block h-[9px] w-[53px] appearance-none bg-[#737a81] pl-[1px] leading-[8px] text-[#e6e7e8]'}"><option>${t.input}</option></select>${icon('caret', 'absolute top-[3px] right-[3px] h-[3px] w-[4px]')}${t.midi ? icon('keys', 'absolute top-[3px] left-[2px] h-[3px] w-[5px]') : ''}</span>
                    ${t.midi ? '' : icon('stereo', 'h-[5px] w-[9px] text-[#e6e7e8]')}
                </div>
            </div>
            <div class="flex w-[5px] items-end bg-[#3a4046]">
                <div class="${t.midi ? 'h-full w-full bg-[#c98330]' : 'h-[12px] w-full bg-[#4f9fd4]'}"></div>
            </div>
        </div>`;
    fill('tracks', `<div class="flex h-[5px] shrink-0 border-b border-[#2e3236]"><div class="w-[4px] bg-[#8fca83]"></div><div class="flex-1"></div><div class="w-[5px] bg-[#4f9fd4]"></div></div>` + tracks.map(trackRow).join(''));

    function audioWave() {
        let s = '';
        for (let x = 0; x < 686; x += 3) {
            const p = x % 107;
            if (p < 92 || p > 98) {
                s += `<path d="M${x} ${p < 50 ? 7.5 : 6.5}h${1 + x % 2 + (p < 50 ? 1 : 0)}" stroke="#4d7a49"/>`;
                if (p < 22 || p > 76) s += `<path d="M${x} 22.5h2.5" stroke="#4d7a49" stroke-width="1.5"/>`;
            }
        }
        for (let x = 27; x < 686; x += 107) {
            s += `<path d="M${x} 17.5h34M${x + 26} 19.5h30M${x - 27} 21.5h70" stroke="#a5e05c" stroke-width="1.5"/>`;
        }
        return s;
    }
    function midiNotes() {
        let s = '<path d="M0 15.5h686" stroke="#8f7357"/>';
        for (let x = 37; x < 686; x += 60) s += `<path d="M${x} 17.5h17" stroke="#7c6650" stroke-width="1.5"/>`;
        return s;
    }
    const clip = t => `
        <div class="${t.midi ? 'relative h-[30px] border-b border-[#6f5a45] bg-[#d7a678]' : 'relative h-[30px] border-b border-[#47663f] bg-[#8fca83]'}">
            <svg class="absolute inset-0 size-full" viewBox="0 0 686 30" preserveAspectRatio="none">${t.midi ? midiNotes() : audioWave()}</svg>
            <span class="${t.midi ? 'relative block h-[6px] w-[30px] bg-[#7c6046] pl-[2px] text-[5px] leading-[6px] text-[#e8d5c2] [clip-path:polygon(0_0,100%_0,88%_100%,0_100%)]' : 'relative block h-[6px] w-[65px] bg-[#54754e] pl-[2px] text-[5px] leading-[6px] text-[#d5e8d0] [clip-path:polygon(0_0,100%_0,95%_100%,0_100%)]'}">${t.midi ? 'Synth 13' : 'Preparing - 120bpm - a'}</span>
        </div>`;
    fill('clips', '<div class="h-[5px] border-b border-[#47663f] bg-[#8fca83]"></div>' + tracks.map(clip).join(''));

    // instrument list
    fill('instruments', ['', ' 2', ' 3', ' 4', ' 5', ' 6', ' 7', ' 8', ' 9', ' 10'].map(n => `
        <li class="flex h-[11px] items-center border-b border-[#242528] bg-[#1d1e20] pr-[3px] pl-[2px]">
            ${icon('power', 'size-[6px] text-[#2d86bb]')}<span class="ml-[2px] flex-1">Mai Tai${n}</span>${icon('caret', 'h-[3px] w-[4px] text-[#999]')}
        </li>`).join(''));

    // channel strips
    const GREEN_INSERTS = ['Phaser', 'Analog Delay', 'Room Reve..', 'Pro EQ', 'Fat Channel'];
    const channels = [];
    for (let i = 1; i <= 12; i++) channels.push({ n: i, kind: 'audio', input: 'Eingang L+R', name: 'Synth ' + i, inserts: GREEN_INSERTS, levels: [44, 41] });
    ['Mai Tai', 'Mai Tai 2', 'Mai Tai 4', 'Mai Tai 3', 'Mai Tai 8', 'Mai Tai 7', 'Mai Tai 6', 'Mai Tai 5', 'Mai Tai 10', 'Mai Tai 9'].forEach((input, i) => {
        const names = ['Mai Tai', 'Synth 14', 'Synth 15', 'Synth 15', 'Synth 20', 'Synth 19', 'Synth 18', 'Synth 17', 'Synth 18', 'Synth 17'];
        channels.push({ n: 13 + i, kind: 'midi', input, name: names[i], inserts: ['Pro EQ', 'Fat Channel'], levels: i % 4 === 3 ? [46, 46] : [51, 51] });
    });
    [['Analog Delay', [78, 78]], ['Ampire', [50, 54]], ['Autofilter', [66, 61]], ['Open AIR', [74, 70]]].forEach(([fx, levels], i) => {
        channels.push({ n: 23 + i, kind: 'fx', input: '', name: 'FX ' + (i + 1), inserts: [fx], levels });
    });

    const THEME = {
        audio: { body: 'bg-[#6a9f5e]', line: 'bg-[#8fc87f]', label: 'text-[#e8efe6]', io: 'bg-[#527049]', ms: 'bg-[#4e6d47]', name: 'bg-[#8fc87f] text-[#16240f]', auto: 'bg-[#3d5638] text-[#82967c]', slots: 'h-[53px]' },
        midi: { body: 'bg-[#9f7a55]', line: 'bg-[#d8a673]', label: 'text-[#f0cd85]', io: 'bg-[#755c43]', ms: 'bg-[#6d563f]', name: 'bg-[#d8a673] text-[#2a1c0e]', auto: 'bg-[#4c3b2c] text-[#94826f]', slots: 'h-[21px]' },
        fx: { body: 'bg-[#2d3035]', line: 'bg-[#33373a]', label: 'text-[#3fa0d8]', io: 'bg-[#3a3d41]', ms: 'bg-[#34373b]', name: 'bg-[#17181a] text-[#e6e7e8]', auto: 'bg-[#1c1d1f] text-[#66686a]', slots: 'h-[11px]' },
    };
    const slotHead = label => `
        <div class="flex h-[11px] items-center gap-[2px] bg-[#303437] pr-[2px] pl-[2px]">
            ${icon('power', 'size-[6px] text-[#1a86d6]')}<span class="flex-1 text-[#d4d6d8]">${label}</span>${icon('caret', 'h-[3px] w-[4px] text-[#77797b]')}${icon('plus', 'size-[4px] text-[#77797b]')}
        </div>`;
    const insert = name => `
        <div class="flex min-h-0 flex-1 items-center gap-[2px] overflow-hidden border-b border-[#34393d] bg-[#454b50] pl-[2px] text-[5px] leading-[7px] whitespace-nowrap text-[#dcdee0]">
            ${icon('power', 'size-[6px] shrink-0 text-[#3a9bd6]')}${name}${name.length < 9 ? icon('caret', 'mr-[2px] ml-auto h-[3px] w-[4px] text-[#5d6267]') : ''}
        </div>`;
    const send = n => `
        <div class="flex min-h-0 flex-1 flex-col bg-[#2b2f31]">
            <div class="flex h-[10px] items-center gap-[2px] bg-[#484d52] pr-[2px] pl-[2px] text-[#d4d5d6]">${icon('power', 'size-[6px] text-[#3a9bd6]')}<span class="flex-1">FX ${n}</span>${icon('caret', 'h-[3px] w-[4px] text-[#5d6267]')}</div>
            <div class="flex h-[6px] items-center">
                <input type="range" aria-label="Send ${n}" class="h-[2px] w-[35px] appearance-none bg-linear-to-r from-[#2b93d0] from-58% to-[#1e2123] to-58% [&::-webkit-slider-thumb]:w-0 [&::-webkit-slider-thumb]:appearance-none">
                ${icon('sendpan', 'h-[5px] w-[5px] shrink-0 text-[#d4d5d6]')}
            </div>
            <span class="mt-[2px] ml-[20px] h-px w-px bg-[#777]"></span>
        </div>`;
    const scale = marks => `<div class="flex h-[50px] w-[6px] flex-col justify-between text-right text-[4px] leading-[4px] font-bold text-[#dfe2df]">${marks.map(m => `<span>${m}</span>`).join('')}</div>`;
    const meter = ([l, r]) => `
        <div class="flex w-[7px] flex-col">
            <div class="h-[6px] bg-black/35"></div>
            <div class="flex flex-1 items-end gap-px bg-[#1a1e24] bg-[repeating-linear-gradient(transparent_0_6px,#26333d_6px_7px)]">
                <div class="w-[3px] bg-[#3485b0]" style="height:${l}%"></div><div class="w-[3px] bg-[#3485b0]" style="height:${r}%"></div>
            </div>
        </div>`;
    const FADER = 'h-[53px] w-[10px] appearance-none [writing-mode:vertical-lr] [direction:rtl] [&::-webkit-slider-thumb]:h-[19px] [&::-webkit-slider-thumb]:w-[10px] [&::-webkit-slider-thumb]:appearance-none [&::-webkit-slider-thumb]:rounded-xs';
    const WHITE_CAP = 'bg-[linear-gradient(90deg,transparent_1px,#ffffff33_1px,#ffffff33_4px,#23282a_4px,#23282a_5px,#ffffff33_5px,#ffffff33_9px,transparent_9px)] [&::-webkit-slider-thumb]:bg-[linear-gradient(#bbb,#fff_30%,#fff_45%,#777_45%,#777_52%,#eee_52%,#ccc)]';
    const BLUE_CAP = 'bg-[linear-gradient(90deg,transparent_1px,#ffffff33_1px,#ffffff33_4px,#15181a_4px,#15181a_5px,#ffffff33_5px,#ffffff33_9px,transparent_9px)] [&::-webkit-slider-thumb]:bg-[linear-gradient(#2a6c8e,#4fa5cb_30%,#4fa5cb_45%,#235a76_45%,#235a76_52%,#4597bd_52%,#2f7da3)]';

    function strip(c) {
        const t = THEME[c.kind];
        const fx = c.kind === 'fx';
        return `
        <article class="flex flex-col border-r border-[#1f2123] ${t.body}">
            <div class="h-px ${t.line}"></div>
            <div class="h-[102px]">
                ${slotHead('Inserts')}
                <div class="flex flex-col ${t.slots}">${c.inserts.map(insert).join('')}</div>
            </div>
            <div class="h-[111px]">
                ${fx ? '' : `${slotHead('Sends')}<div class="flex h-[86px] flex-col">${[1, 2, 3, 4].map(send).join('')}</div>`}
            </div>
            <div class="h-px bg-[#26282a]"></div>
            <div class="px-[2px] pt-[3px]">
                <div class="h-[18px] overflow-hidden text-center leading-[9px] whitespace-nowrap ${t.io} ${t.label}">
                    <div class="flex h-[9px] items-center justify-center">${fx ? '<span class="h-[3px] w-full border-y border-dotted border-[#3fa0d8] bg-[#245c7c]"></span>' : c.input}</div>
                    <div>Main</div>
                </div>
                <div class="flex h-[8px] justify-center bg-[#1b1f26]"><span class="w-[2px] bg-[#1a86d6]"></span></div>
                <div class="flex h-[11px] items-center justify-around text-[#e8e9e8]"><span>0dB</span><span>&lt;C&gt;</span></div>
                <div class="mt-px grid h-[20px] grid-cols-2 overflow-hidden rounded-xs ${fx ? '' : t.ms}">
                    <button class="h-[10px] border-r border-b border-black/20 text-[#c4c6c4] ${t.ms}">M</button>
                    <button class="h-[10px] border-b border-black/20 text-[#c4c6c4] ${fx ? 'bg-[#0d9d50]' : t.ms}">S</button>
                    ${fx ? '' : `<button aria-label="Aufnahme" class="flex h-[10px] items-center justify-center border-r border-black/20"><span class="size-[4px] rounded-full bg-white"></span></button>
                    <button aria-label="Monitor" class="flex h-[10px] items-center justify-center text-white">${icon('half', 'size-[5px]')}</button>`}
                </div>
                <div class="mt-[4px] flex h-[61px] justify-between">
                    <div class="flex gap-px">
                        <div class="pt-[6px]">${scale([10, 6, 0, -6, -12, -24, -36, -48])}</div>
                        ${meter(c.levels)}
                        <div class="flex items-end"><input type="range" aria-label="Fader ${c.name}" value="94" class="${FADER} ${fx ? BLUE_CAP : WHITE_CAP}"></div>
                    </div>
                    <div class="flex flex-col items-end justify-between pb-[3px]">
                        <span class="flex h-[6px] w-[7px] flex-col justify-between border-y-2 ${fx ? 'border-t-[#3fa0d8] border-b-[#55585b]' : 'border-[#3fa0d8]'} bg-[#26343c]"></span>
                        ${icon('knob', 'size-[7px] text-[#cfd2cf]')}
                    </div>
                </div>
                <div class="flex h-[11px] items-center justify-between px-[2px] font-bold text-white"><span>${c.n}</span>${fx ? '<span class="font-normal text-[#aaa]">FX</span>' : icon(c.kind === 'midi' ? 'keys' : 'wave', 'h-[6px] w-[9px] text-[#dfe2df]')}</div>
                <button class="mt-px block h-[8px] w-full ${t.auto}">Auto: Off</button>
            </div>
            <div class="mt-[2px] h-[8px] border-t border-[#26282a] text-center leading-[7px] ${t.name}">${c.name}</div>
        </article>`;
    }
    fill('channels', channels.map(strip).join(''));

    fill('mainout', `
        <article class="flex flex-col bg-[#2d3035]">
            <button class="flex h-[11px] items-center bg-[#1c2d38] pr-[3px] pl-[9px] text-[#dcddde]"><span class="flex-1 text-left">Mix FX</span>${icon('caret', 'h-[3px] w-[4px]')}</button>
            <div class="flex h-[157px] items-start border-b border-[#1c1d1f]"><div class="flex h-[10px] w-full items-center gap-[2px] pr-[2px] pl-[2px]">${icon('power', 'size-[5px] text-[#66686a]')}<span class="flex-1">Inserts</span>${icon('caret', 'h-[3px] w-[4px] text-[#77797b]')}${icon('plus', 'size-[4px] text-[#77797b]')}</div></div>
            <div class="flex h-[46px] items-start border-b border-[#1c1d1f]"><div class="flex h-[10px] w-full items-center gap-[2px] pr-[2px] pl-[2px]">${icon('power', 'size-[5px] text-[#66686a]')}<span class="flex-1">Post</span>${icon('caret', 'h-[3px] w-[4px] text-[#77797b]')}${icon('plus', 'size-[4px] text-[#77797b]')}</div></div>
            <div class="px-[2px] pt-[4px]">
                <div class="h-[9px] bg-[#26282b]"></div>
                <div class="h-[9px] bg-[#3a3d41] text-center leading-[9px] whitespace-nowrap text-[#dcddde]">Output 1 + 2</div>
                <div class="flex h-[8px] items-center justify-around bg-[#1b1f26] text-[5px] text-[#3d7fa3]"><span>-32.7</span><span>-34.0</span></div>
                <div class="flex h-[11px] items-center justify-around text-[#e6e7e8]"><span>-46.1</span><span class="text-[#55585b]">0</span></div>
                <div class="mt-px grid h-[20px] grid-cols-6">
                    <button class="col-span-3 h-[10px] border-r border-b border-black/30 bg-[#34373b]">M</button>
                    <button class="col-span-3 h-[10px] border-b border-black/30 bg-[#34373b]">S</button>
                    <button aria-label="Metronom" class="col-span-2 flex h-[10px] items-center justify-center bg-[#3a87ad]"><svg class="h-[5px] w-[6px]" viewBox="0 0 12 10"><path d="M6 0l2 6h3v4H1V6h3z" fill="#fff"/></svg></button>
                    <button aria-label="Dim" class="col-span-2 flex h-[10px] items-center justify-center bg-[#34373b]"><svg class="h-[7px] w-[4px]" viewBox="0 0 8 14"><path d="M1 1h6v6l-2 2v5H3V9L1 7z" fill="#999"/></svg></button>
                    <button aria-label="Stereo" class="col-span-2 flex h-[10px] items-center justify-center bg-[#34373b]">${icon('stereo', 'h-[5px] w-[9px] text-[#b9bcbf]')}</button>
                </div>
                <div class="mt-[4px] flex h-[61px] gap-px">
                    <div class="flex w-[12px] flex-col justify-between pb-[2px] pl-[2px]"><span class="h-[6px] w-[6px] bg-[#4a4d4a]"></span>${icon('knob', 'size-[7px] text-[#cfd2cf]')}</div>
                    <div class="flex items-end"><input type="range" aria-label="Fader Main" value="14" class="${FADER} ${BLUE_CAP}"></div>
                    <div class="flex w-[7px] items-end gap-px bg-[#1a1e24]"><div class="h-[34%] w-[3px] border-t border-[#c06a50] bg-[#3485b0]"></div><div class="h-[30%] w-[3px] border-t border-[#c06a50] bg-[#3485b0]"></div></div>
                    <div class="pt-[6px]">${scale([6, -3, -6, -24, -36, -48, -60])}</div>
                </div>
                <div class="flex h-[11px] items-center justify-center text-[#999]"><svg class="h-[5px] w-[7px]" viewBox="0 0 14 10"><path d="M1 1l12 3-10 4M2 8h9M9 1h4v3" fill="none" stroke="currentColor" stroke-width="1.500"/></svg></div>
                <button class="mt-px block h-[8px] w-full bg-[#1c1d1f] text-[#66686a]">Auto: Off</button>
            </div>
            <div class="mt-[2px] h-[8px] bg-[#17181a] text-center leading-[8px] text-[#e6e7e8]">Main</div>
        </article>`);

    // device table
    fill('devices', [
        ['06', 'Ampire', 'FX 2 - Inserts - 1 - Ampire', 6],
        ['00', 'Analog Delay', 'Synth 11 - Inserts - 2 - Analog Delay', 0],
        ['00', 'Analog Delay', 'Synth 10 - Inserts - 2 - Analog Delay', 0],
        ['00', 'Analog Delay', 'Synth 5 - Inserts - 2 - Analog Delay', 0],
        ['03', 'Analog Delay', 'FX 1 - Inserts - 1 - Analog Delay', 3],
        ['00', 'Analog Delay', 'Synth 2 - Inserts - 2 - Analog Delay', 0],
        ['00', 'Analog Delay', 'Synth 3 - Inserts - 2 - Analog Delay', 0],
        ['00', 'Analog Delay', 'Synth 1 - Inserts - 2 - Analog Delay', 0],
        ['00', 'Analog Delay', 'Synth 6 - Inserts - 2 - Analog Delay', 0],
    ].map(([cpu, name, path, load]) => `
        <tr class="h-[11px] whitespace-nowrap">
            <td><div class="flex items-center justify-between pr-[3px] pl-[2px]"><span class="h-[4px] w-[28px] bg-[#303236]"><span class="block h-full bg-[#2b93d0]" style="width:${load}%"></span></span>${cpu}</div></td>
            <td>${icon('check', 'mx-auto size-[6px] text-white')}</td>
            <td><span class="mr-[2px] inline-block w-[7px] bg-[#42464b] text-center text-[5px] font-bold text-white">FX</span>${name}</td>
            <td class="pl-[2px]">Insert</td>
            <td class="pl-[2px]">${path}</td>
            <td class="overflow-hidden">0</td>
        </tr>`).join(''));
    </script>
</body>
</html>
